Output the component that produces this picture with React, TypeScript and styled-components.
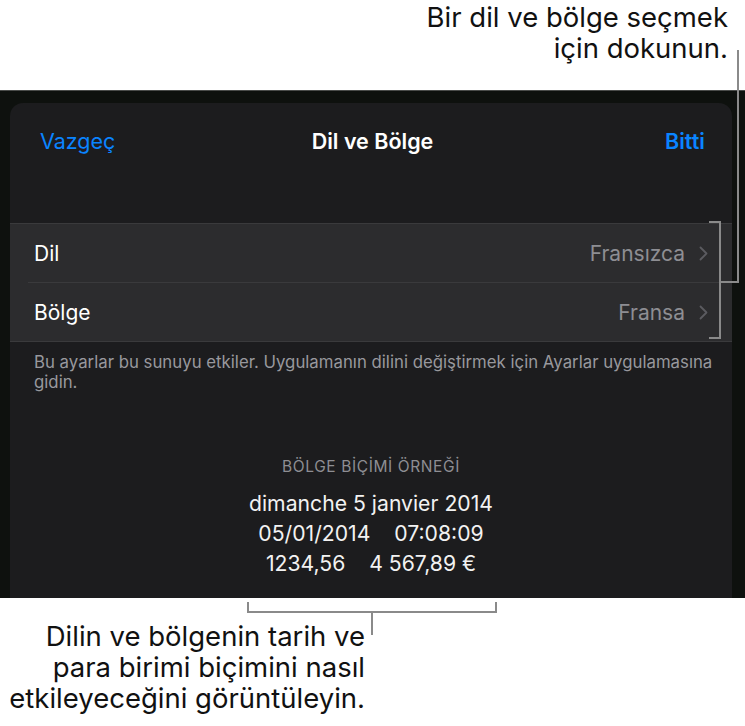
import React from "react";
import styled, { createGlobalStyle } from "styled-components";

const GlobalStyle = createGlobalStyle`
  html, body {
    margin: 0;
    padding: 0;
    background: #ffffff;
  }
  body {
    font-family: Inter, "Noto Sans", "Liberation Sans", sans-serif;
  }
`;

const Page = styled.div`
  position: relative;
  width: 745px;
  height: 726px;
  overflow: hidden;
  background: #ffffff;
`;

const Callout = styled.div<{ $height: number; $right: number }>`
  height: ${(p) => p.$height}px;
  box-sizing: border-box;
  padding-right: ${(p) => p.$right}px;
  text-align: right;
  color: #111111;
  font-size: 27.5px;
  line-height: 31px;
`;

const TopCallout = styled(Callout)`
  padding-top: 2px;
`;

const BottomCallout = styled(Callout)`
  width: 372px;
  padding-top: 23px;
`;

const Screen = styled.div`
  height: 508px;
  box-sizing: border-box;
  background: #0e110e;
  border-top: 1px solid #4a4c4a;
  padding: 12px 13px 0 10px;
  overflow: hidden;
`;

const Sheet = styled.div`
  height: 520px;
  background: #1c1c1e;
  border-radius: 13px;
  color: #ffffff;
`;

const Header = styled.div`
  display: grid;
  grid-template-columns: 1fr auto 1fr;
  align-items: center;
  height: 76px;
  padding: 0 27px 0 30px;
  font-size: 21.5px;
`;

const NavButton = styled.span<{ $bold?: boolean; $align: "left" | "right" }>`
  color: #0a84ff;
  font-weight: ${(p) => (p.$bold ? 600 : 400)};
  text-align: ${(p) => p.$align};
`;

const Title = styled.span`
  font-weight: 600;
`;

const Group = styled.div`
  margin-top: 44px;
  background: #2c2c2e;
  border-top: 1px solid #3a3a3c;
  border-bottom: 1px solid #3a3a3c;
`;

const Row = styled.div<{ $last?: boolean }>`
  display: flex;
  align-items: center;
  height: 58px;
  margin-left: 18px;
  padding: 0 24px 0 6px;
  border-bottom: ${(p) => (p.$last ? "none" : "1px solid #3a3a3c")};
  font-size: 21px;
`;

const RowLabel = styled.span`
  flex: 1;
`;

const RowValue = styled.span`
  color: #8e8e93;
`;

const Chevron = styled.svg`
  margin-left: 14px;
  width: 9px;
  height: 15px;
`;

const Footnote = styled.p`
  margin: 0;
  padding: 10px 10px 0 24px;
  font-size: 16.8px;
  line-height: 20px;
  color: #98989d;
`;

const Example = styled.div`
  margin-top: 65px;
  display: flex;
  flex-direction: column;
  align-items: center;
`;

const ExampleTitle = styled.div`
  font-size: 15.5px;
  color: #8e8e93;
  letter-spacing: 0.6px;
  margin-bottom: 12px;
`;

const ExampleLine = styled.div`
  font-size: 21.2px;
  line-height: 30px;
  color: #f2f2f2;
  white-space: pre;
`;

const Leaders = styled.svg`
  position: absolute;
  inset: 0;
  pointer-events: none;
`;

const rows = [
  { label: "Dil", value: "Fransızca" },
  { label: "Bölge", value: "Fransa" },
];

export default function App() {
  return (
    <Page>
      <GlobalStyle />
      <TopCallout $height={90} $right={17}>
        Bir dil ve bölge seçmek
        <br />
        için dokunun.
      </TopCallout>
      <Screen>
        <Sheet>
          <Header>
            <NavButton $align="left">Vazgeç</NavButton>
            <Title>Dil ve Bölge</Title>
            <NavButton $align="right" $bold>
              Bitti
            </NavButton>
          </Header>
          <Group>
            {rows.map((r, i) => (
              <Row key={r.label} $last={i === rows.length - 1}>
                <RowLabel>{r.label}</RowLabel>
                <RowValue>{r.value}</RowValue>
                <Chevron viewBox="0 0 9 15">
                  <path
                    d="M1.5 1.5 L7.5 7.5 L1.5 13.5"
                    fill="none"
                    stroke="#5b5b60"
                    strokeWidth="1.8"
                    strokeLinecap="round"
                    strokeLinejoin="round"
                  />
                </Chevron>
              </Row>
            ))}
          </Group>
          <Footnote>
            Bu ayarlar bu sunuyu etkiler. Uygulamanın dilini değiştirmek için
            Ayarlar uygulamasına gidin.
          </Footnote>
          <Example>
            <ExampleTitle>BÖLGE BİÇİMİ ÖRNEĞİ</ExampleTitle>
            <ExampleLine>dimanche 5 janvier 2014</ExampleLine>
            <ExampleLine>{"05/01/2014    07:08:09"}</ExampleLine>
            <ExampleLine>{"1234,56    4 567,89 €"}</ExampleLine>
          </Example>
        </Sheet>
      </Screen>
      <BottomCallout $height={128} $right={7}>
        Dilin ve bölgenin tarih ve
        <br />
        para birimi biçimini nasıl
        <br />
        etkileyeceğini görüntüleyin.
      </BottomCallout>
      <Leaders width="745" height="726" viewBox="0 0 745 726">
        <g fill="none" stroke="#8a8a8a" strokeWidth="2">
          <path d="M738 50 V282 H720" />
          <path d="M709 222 H720 V338 H709" />
          <path d="M248 602 V612 H496 V602" />
          <path d="M372 612 V635" />
        </g>
      </Leaders>
    </Page>
  );
}
